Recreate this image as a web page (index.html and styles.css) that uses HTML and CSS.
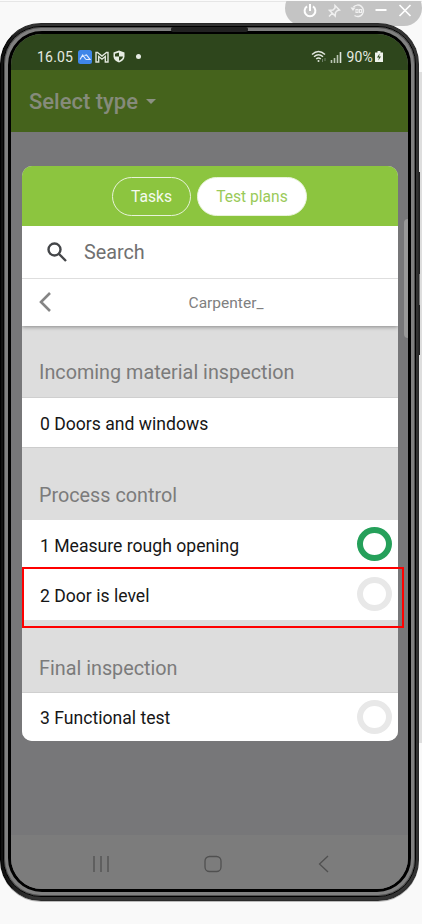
FILE: index.html
```html
<!DOCTYPE html>
<html lang="en">
<head>
<meta charset="utf-8">
<title>Test plans</title>
<link rel="stylesheet" href="styles.css">
</head>
<body>
<div class="side-edge"></div>
<div class="window-tools">
  <svg viewBox="0 0 16 16" class="tool"><path d="M8 1v7M5 3.300a5.400 5.400 0 1 0 6 0" stroke-width="2"/></svg>
  <svg viewBox="0 0 16 16" class="tool"><path d="M9 2.500 13.500 7l-2 .5-2 2-.3 3.500-5.700-5.700 3.500-.3 2-2zM6.300 10.200 3 13.500" stroke-width="1.500"/></svg>
  <svg viewBox="0 0 16 16" class="tool"><path d="M3.500 4a5.700 5.700 0 1 1 1 8.500" stroke-width="1.500"/><path d="M.5 4.500h5L3 8z" fill="#f0f0f0" stroke="none"/><path d="M6 6.500h2v3H6zM9.500 6.500h2v3h-2z" stroke-width="1.100"/></svg>
  <svg viewBox="0 0 16 16" class="tool"><path d="M2.500 7h11" stroke-width="2"/></svg>
  <svg viewBox="0 0 16 16" class="tool"><path d="m2.500 2 11 11m0-11-11 11" stroke-width="1.700"/></svg>
</div>
<div class="side-buttons"></div>
<div class="phone">
  <div class="metal">
    <div class="earpiece"></div>
    <div class="bezel">
      <main class="screen">
        <header class="status">
          <span>16.05</span>
          <svg class="app-icon" viewBox="0 0 14 14"><rect width="14" height="14" rx="2.500" fill="#3f86e8"/><path d="m2 9.500 2.700-4.500 3.200 4.500M6.500 5.500 8.500 5l3.500 4.500H8" fill="none" stroke="#e0ebff" stroke-width="1.200"/></svg>
          <svg class="mail-icon" viewBox="0 0 14 12"><path d="M1 11V1.500h1.500L7 5l4.500-3.500H13V11h-2.700V5.500L7 8.200 3.700 5.500V11z" fill="none" stroke="#dfe5db" stroke-width="1.400"/></svg>
          <svg class="shield-icon" viewBox="0 0 12 13"><path d="M6 .5 11.500 2.500v4c0 3-2.500 5-5.500 6-3-1-5.500-3-5.500-6v-4z" fill="#e6ece2"/><path d="M6 2.500v4H2V3.800zM6 6.500h4c-.3 2-2 3.500-4 4.300z" fill="#2e461c"/></svg>
          <i class="dot"></i>
          <div class="status-right">
            <svg class="wifi-icon" viewBox="0 0 16 13"><path d="M1 4.500q6.500-6 13 0M3 6.800q4.500-4 9 0M5.200 9q2.300-2 4.600 0" fill="none" stroke="#dfe5db" stroke-width="1.500"/><circle cx="7.500" cy="11" r="1" fill="#dfe5db"/><path d="M11.500 9v3m2.500-4v3" stroke="#71816a"/></svg>
            <svg class="signal-icon" viewBox="0 0 12 11"><path d="M1.500 11V8M4.500 11V6M7.500 11V3" stroke="#b9c4b3" stroke-width="1.600"/><path d="M10.500 11V0" stroke="#dfe5db" stroke-width="1.600"/></svg>
            <span>90%</span>
            <svg class="battery-icon" viewBox="0 0 8 11"><path d="M2.500 0h3v1.500H8V11H0V1.500h2.500z" fill="#eef2eb"/><path d="M4.700 2.500 2 6.500h2l-.7 3L6 5.500H4z" fill="#2e461c"/></svg>
          </div>
        </header>
        <div class="appbar"><span>Select type</span><i class="caret"></i></div>
        <section class="dialog">
          <nav class="tabs"><button class="tab">Tasks</button><button class="tab active">Test plans</button></nav>
          <label class="search">
            <svg viewBox="0 0 20 20"><circle cx="7.500" cy="7.500" r="6" /><path d="m12 12 7 7"/></svg>
            <span>Search</span>
          </label>
          <div class="crumb">
            <svg viewBox="0 0 12 20"><path d="M11 1 2 10l9 9"/></svg>
            <span>Carpenter_</span>
          </div>
          <h2 class="group first">Incoming material inspection</h2>
          <div class="item zero"><span>0 Doors and windows</span></div>
          <h2 class="group second">Process control</h2>
          <div class="item one"><span>1 Measure rough opening</span><i class="ring done"></i></div>
          <div class="item two"><span>2 Door is level</span><i class="ring"></i></div>
          <h2 class="group third">Final inspection</h2>
          <div class="item three"><span>3 Functional test</span><i class="ring"></i></div>
        </section>
        <footer class="navbar">
          <svg viewBox="0 0 18 18"><path d="M2 1v16M9 1v16M16 1v16"/></svg>
          <svg viewBox="0 0 18 18"><rect x="1" y="1.500" width="16" height="15" rx="4.500"/></svg>
          <svg viewBox="0 0 18 18"><path d="M13 1 4.500 9l8.500 8"/></svg>
        </footer>
      </main>
    </div>
  </div>
</div>
<div class="scroll-handle"></div>
<div class="highlight"></div>
</body>
</html>
```
FILE: styles.css
```css
* { box-sizing: border-box; }
body {
  margin: 0;
  width: 422px;
  height: 924px;
  padding-top: 22px;
  position: relative;
  overflow: hidden;
  background: #f9f9f9;
  border-top: 1px solid #fbfbfb;
  box-shadow: inset 0 1px #e6e6e6;
  font-family: Roboto, sans-serif;
}
.side-edge {
  position: absolute;
  top: 71px;
  right: 0;
  width: 5px;
  height: 671px;
  background: #dedede;
}
.side-buttons {
  position: absolute;
  top: 171px;
  left: 418px;
  width: 2px;
  height: 183px;
  background: linear-gradient(#222 0 102px, #777 102px 133px, #222 133px);
}
.window-tools {
  position: absolute;
  top: -11px;
  left: 285px;
  width: 137px;
  height: 36px;
  padding: 13px 9px 0 17px;
  display: flex;
  justify-content: space-between;
  border-radius: 18px;
  background: #c4c4c4;
}
.tool { width: 16px; height: 16px; fill: none; stroke: #fff; }
.tool:nth-child(2), .tool:nth-child(3) { stroke: #f0f0f0; }
.phone {
  position: relative;
  width: 419px;
  height: 878px;
  padding: 2px 2px 3px;
  border: 1px solid #2a2a2a;
  border-left-color: #000;
  border-radius: 41px;
  background: linear-gradient(90deg, #111 0 4px, #333 30px);
  box-shadow: 0 1px #bbb;
}
.metal {
  position: relative;
  height: 100%;
  padding: 4px;
  border: 1px solid #000;
  border-radius: 38px;
  background: #808080;
  box-shadow: inset 0 0 0 1px #505050;
}
.earpiece {
  position: absolute;
  top: 0;
  left: 167px;
  width: 77px;
  height: 5px;
  border-radius: 2px;
  background: #222;
}
.bezel {
  height: 100%;
  border: 3px solid #000;
  border-radius: 34px;
  background: #000;
}
.screen {
  height: 100%;
  display: flex;
  flex-direction: column;
  overflow: hidden;
  border-radius: 31px;
  background: #777779;
}
.status {
  height: 36px;
  flex: none;
  display: flex;
  align-items: center;
  padding: 9px 25px 0 26px;
  background: #2e461c;
  color: #e5eae2;
  font-size: 14px;
  letter-spacing: .2px;
}
.app-icon { width: 14px; height: 14px; margin-left: 5px; }
.mail-icon { width: 14px; height: 12px; margin-left: 3px; }
.shield-icon { width: 12px; height: 13px; margin-left: 4px; }
.dot { width: 5px; height: 5px; margin-left: 11px; border-radius: 50%; background: #e5eae2; }
.status-right { display: flex; align-items: center; margin-left: auto; }
.wifi-icon { width: 16px; height: 13px; }
.signal-icon { width: 12px; height: 11px; margin: 1px 4px 0 3px; }
.battery-icon { width: 8px; height: 11px; margin-left: 2px; }
.appbar {
  height: 62px;
  flex: none;
  display: flex;
  align-items: center;
  padding: 0 18px;
  background: #45631c;
  color: #858b7b;
  font-size: 22px;
  font-weight: 500;
}
.caret { margin-left: 8px; border: 5px solid transparent; border-top-color: #8c9183; border-bottom: 0; }
.dialog {
  width: 376px;
  height: 575px;
  margin: 34px 0 0 11px;
  flex: none;
  overflow: hidden;
  border-radius: 10px;
  background: #ddd;
}
.tabs {
  height: 60px;
  display: flex;
  justify-content: center;
  align-items: center;
  gap: 6px;
  padding-right: 1px;
  background: #8cc53f;
}
.tab {
  width: 79px;
  height: 39px;
  padding: 2px 0 0;
  border: 1px solid #e8f3d9;
  border-radius: 20px;
  background: none;
  color: #f5faef;
  font: 15.6px Roboto, sans-serif;
}
.tab.active { width: 110px; background: #fff; color: #9aca59; }
.search {
  position: relative;
  z-index: 1;
  height: 53px;
  display: flex;
  align-items: center;
  gap: 17px;
  padding-left: 25px;
  background: #fff;
  border-bottom: 1px solid #dedede;
  color: #707070;
  font-size: 19.8px;
}
.search svg { width: 20px; height: 20px; fill: none; stroke: #444649; stroke-width: 2.4; }
.crumb {
  position: relative;
  height: 47px;
  display: flex;
  align-items: center;
  padding-left: 17px;
  background: #fff;
  box-shadow: 0 1px 4px #888;
  color: #808080;
  font-size: 15.5px;
}
.crumb svg { width: 12px; height: 20px; margin-bottom: 2px; fill: none; stroke: #858585; stroke-width: 2.6; }
.crumb span { flex: 1; text-align: center; padding-left: 3px; }
.group {
  margin: 0;
  display: flex;
  align-items: flex-end;
  padding: 0 17px 12px;
  border-bottom: 1px solid #cfcfcf;
  color: #7b7b7b;
  font-size: 19.8px;
  font-weight: 400;
  line-height: 24px;
}
.first { height: 72px; }
.second { height: 72px; padding-bottom: 11px; border-bottom-color: #ddd; }
.third { height: 73px; padding-bottom: 11px; }
.item {
  display: flex;
  align-items: center;
  justify-content: space-between;
  padding: 0 6px 0 18px;
  background: #fff;
  color: #161616;
  font-size: 17.6px;
}
.item span { padding-top: 2px; }
.zero { height: 50px; border-bottom: 1px solid #ccc; }
.one { height: 50px; }
.two { height: 50px; }
.three { height: 48px; }
.ring { width: 35px; height: 34px; margin-bottom: 2px; border: 6px solid #e8e8e8; border-radius: 50%; }
.three .ring { margin-bottom: 0; }
.done { border-color: #25a05a; }
.navbar {
  margin-top: auto;
  height: 54px;
  flex: none;
  display: flex;
  justify-content: space-between;
  align-items: center;
  padding: 3px 76px 0 81px;
  background: #7c7c7c;
}
.navbar svg { width: 18px; height: 18px; fill: none; stroke: #505050; stroke-width: 1.3; }
.navbar svg:last-child { margin-right: -1px; }
.scroll-handle {
  position: absolute;
  top: 218px;
  left: 404px;
  width: 4px;
  height: 119px;
  border-radius: 4px 0 0 4px;
  background: #999;
}
.highlight {
  position: absolute;
  top: 566px;
  left: 22px;
  width: 382px;
  height: 61px;
  border: 2px solid #f00;
}
```
